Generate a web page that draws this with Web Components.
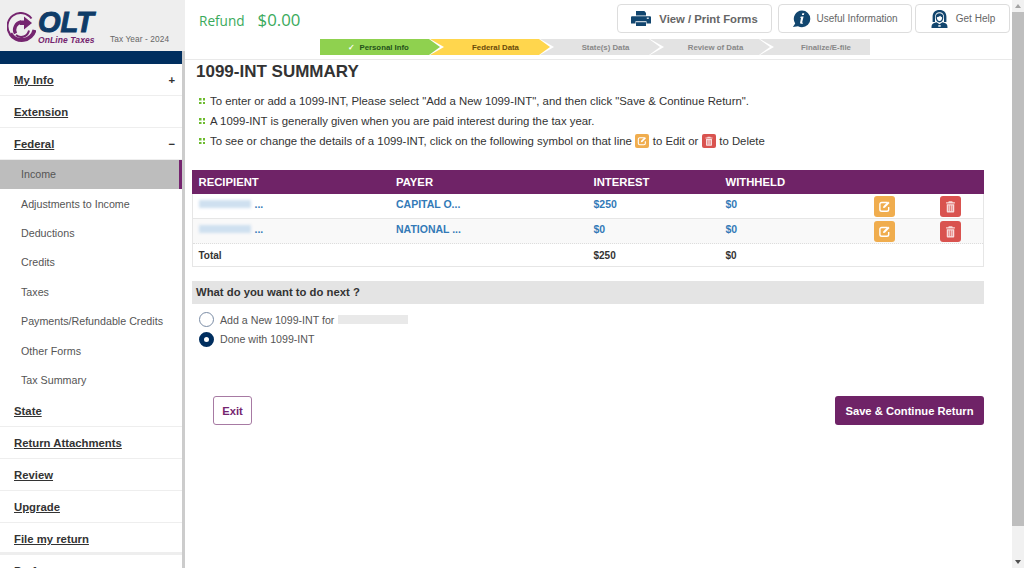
<!DOCTYPE html>
<html>
<head>
<meta charset="utf-8">
<title>1099-INT Summary</title>
<style>
html, body { margin: 0; height: 568px; overflow: hidden; background: #fff; }
body { font-family: "Liberation Sans", Arial, sans-serif; font-size: 12px; color: #333; }
</style>
</head>
<body>
<olt-app>
	<olt-sidebar slot="side">
		<olt-nav-item label="My Info" sign="+"></olt-nav-item>
		<olt-nav-item label="Extension"></olt-nav-item>
		<olt-nav-item label="Federal" sign="−"></olt-nav-item>
		<olt-sub-item active>Income</olt-sub-item>
		<olt-sub-item>Adjustments to Income</olt-sub-item>
		<olt-sub-item>Deductions</olt-sub-item>
		<olt-sub-item>Credits</olt-sub-item>
		<olt-sub-item>Taxes</olt-sub-item>
		<olt-sub-item>Payments/Refundable Credits</olt-sub-item>
		<olt-sub-item>Other Forms</olt-sub-item>
		<olt-sub-item>Tax Summary</olt-sub-item>
		<olt-nav-item label="State"></olt-nav-item>
		<olt-nav-item label="Return Attachments"></olt-nav-item>
		<olt-nav-item label="Review"></olt-nav-item>
		<olt-nav-item label="Upgrade"></olt-nav-item>
		<olt-nav-item label="File my return" thick></olt-nav-item>
		<olt-nav-item label="Preferences"></olt-nav-item>
	</olt-sidebar>
	<olt-topbar slot="top"></olt-topbar>
	<olt-summary slot="main"></olt-summary>
</olt-app>
<script>
const ICONS = {
	edit: `<svg viewBox="0 0 14 14" width="100%" height="100%"><path d="M9.6 3.2H4.4A1.7 1.7 0 0 0 2.7 4.9v4.8a1.7 1.7 0 0 0 1.7 1.7h4.8a1.7 1.7 0 0 0 1.7-1.7V7.4" fill="none" stroke="#fff" stroke-width="1.3"/><path d="M6 6.7 10.3 2.4l1.4 1.4L7.4 8.1 5.600 8.500z" fill="#fff"/></svg>`,
	trash: `<svg viewBox="0 0 14 14" width="100%" height="100%"><path d="M5.400 2.100h3.200l.5.900h2v1.100H2.900V3h2z" fill="#fff" opacity=".8"/><path d="M3.500 4.800h7v6.900a.8.8 0 0 1-.8.800H4.300a.8.8 0 0 1-.8-.8z" fill="#fff" opacity=".8"/><path d="M5.400 6v5.300M7 6v5.300M8.600 6v5.300" stroke="#d9534f" stroke-width=".6"/></svg>`,
	printer: `<svg viewBox="0 0 20 15" width="20" height="15"><path d="M5 0h8.300L15 1.700V4.500H5z" fill="#12466f"/><path d="M1 5.200h18a1 1 0 0 1 1 1V12.500H15.500V10.300H4.500V12.500H0V6.200a1 1 0 0 1 1-1z" fill="#12466f"/><path d="M5 11.200h10V15H5z" fill="#12466f"/><path d="M15.800 6.600h2v1.200h-2z" fill="#fff"/></svg>`,
	info: `<svg viewBox="0 0 19 18" width="19" height="18"><path d="M10 .6a8.300 8.300 0 0 1 0 16.600 8.400 8.400 0 0 1-4-1L.9 17.100l2.300-3.600A8.300 8.300 0 0 1 10 .6z" fill="#12466f"/><path d="M10.300 3.200h2l-.4 1.800H9.900zM9.500 6.500h2.100l-1.400 5.800c-.1.500.2.600.9.400l-.1.700c-1.300.6-3.100.6-2.900-.9l1-4.900-1 .1.1-.8z" fill="#fff"/></svg>`,
	help: `<svg viewBox="0 0 19 18" width="19" height="18"><path d="M9.500 0C5.200 0 2.600 2.600 2.600 6.600V12H5V6.800C5 4 6.900 2.200 9.500 2.200S14 4 14 6.800V12h2.400V6.600C16.400 2.600 13.800 0 9.500 0z" fill="#12466f"/><path d="M9.500 3.200c2.400 0 3.800 1.600 3.800 4 0 2.800-1.500 5.200-3.800 5.200S5.700 10 5.700 7.200c0-2.400 1.400-4 3.800-4z" fill="#12466f"/><path d="M6.900 7.200c1.400 0 2.500-.5 3.300-1.400.4.800 1 1.300 1.900 1.400.1 2.100-1.100 3.900-2.600 3.900S6.800 9.300 6.900 7.200z" fill="#fff"/><path d="M1.500 18c0-2.300.4-3.700 1.600-4.400 1-.6 2.300-.9 3.500-1.300l2.900 2 2.900-2c1.200.4 2.500.7 3.500 1.300 1.200.7 1.600 2.100 1.600 4.400z" fill="#12466f"/><path d="M8.300 15.200h2.400v1.500H8.300z" fill="#fff"/></svg>`
}

class OltApp extends HTMLElement {
	constructor() {
		super()
		this.attachShadow({ mode: "open" })
		this.shadowRoot.innerHTML = `
		<style>
		:host { display: flex; height: 568px; overflow: hidden; }
		.side { flex: 0 0 185px; height: 568px; overflow: hidden; }
		.body { flex: 1; min-width: 0; display: flex; flex-direction: column; }
		.bar { flex: 0 0 12px; background: #f1f1f1; display: flex; flex-direction: column; align-items: center; }
		.arrow { flex: 0 0 12px; display: flex; align-items: center; justify-content: center; }
		.thumb { flex: 0 0 514px; width: 100%; background: #bebebe; }
		.rest { flex: 1; }
		.up { border: 3px solid transparent; border-top: 0; border-bottom: 4px solid #a3a3a3; }
		.down { border: 3px solid transparent; border-bottom: 0; border-top: 4px solid #505050; }
		</style>
		<div class="side"><slot name="side"></slot></div>
		<div class="body"><slot name="top"></slot><slot name="main"></slot></div>
		<div class="bar">
			<div class="arrow"><i class="up"></i></div>
			<div class="thumb"></div>
			<div class="rest"></div>
			<div class="arrow"><i class="down"></i></div>
		</div>`
	}
}

class OltSidebar extends HTMLElement {
	constructor() {
		super()
		this.attachShadow({ mode: "open" })
		this.shadowRoot.innerHTML = `
		<style>
		:host { display: block; height: 568px; background: #fff; box-sizing: border-box; border-right: 3px solid #ccc; }
		.brand { height: 51px; width: 185px; background: #eee; display: flex; }
		.mark { margin: 12px 0 0 7px; flex: none; }
		.words { margin: 9px 0 0 2px; width: 67px; flex: none; }
		.olt { font: italic 900 29px/26px "Liberation Sans", Arial, sans-serif; color: #0f3c68; -webkit-text-stroke: 1px #0f3c68; }
		.tag { font: italic bold 8.500px/10px "Liberation Sans", Arial, sans-serif; color: #75256f; white-space: nowrap; letter-spacing: .1px; }
		.year { font-size: 8.300px; color: #666; margin: 34px 0 0 5px; white-space: nowrap; line-height: 10px; letter-spacing: .1px; }
		.navy { height: 13px; width: 182px; background: #002e5f; }
		</style>
		<div class="brand">
			<svg class="mark" width="29" height="32" viewBox="0 0 29 32">
				<path d="M24.500 6.500A13 13 0 0 0 3 22" fill="none" stroke="#75256f" stroke-width="2"/>
				<path d="M3.300 21.500A13.200 13.200 0 0 0 27.500 18" fill="none" stroke="#75256f" stroke-width="4"/>
				<path d="M8.500 21.500A8 8 0 0 1 14 10" fill="none" stroke="#75256f" stroke-width="3.400"/>
				<path d="M22 18.500A8 8 0 0 1 9 23" fill="none" stroke="#75256f" stroke-width="2"/>
				<path d="M13 8.500h4V4.500l8 6.500-8 6.500V13h-4z" fill="#75256f"/>
			</svg>
			<div class="words"><div class="olt">OLT</div><div class="tag">OnLine Taxes</div></div>
			<div class="year">Tax Year - 2024</div>
		</div>
		<div class="navy"></div>
		<slot></slot>`
	}
}

class OltNavItem extends HTMLElement {
	constructor() {
		super()
		this.attachShadow({ mode: "open" })
	}
	connectedCallback() {
		const sign = this.getAttribute("sign")
		this.shadowRoot.innerHTML = `
		<style>
		:host { display: flex; align-items: center; justify-content: space-between; height: 32px; box-sizing: border-box; border-bottom: 1px solid #eee; padding: 0 7px 0 14px; font-size: 11.340px; font-weight: bold; color: #333; }
		:host([thick]) { border-bottom-width: 3px; padding-top: 2px; }
		</style>
		<u>${this.getAttribute("label")}</u>${sign ? `<span>${sign}</span>` : ""}`
	}
}

class OltSubItem extends HTMLElement {
	constructor() {
		super()
		this.attachShadow({ mode: "open" })
		this.shadowRoot.innerHTML = `
		<style>
		:host { display: flex; align-items: center; height: 29.400px; box-sizing: border-box; padding: 0 0 1px 21px; font-size: 10.700px; color: #555; }
		:host([active]) { background: #bdbdbd; border-right: 3px solid #75256f; }
		</style>
		<slot></slot>`
	}
}

class OltTopbar extends HTMLElement {
	constructor() {
		super()
		this.attachShadow({ mode: "open" })
		this.shadowRoot.innerHTML = `
		<style>
		:host { display: block; height: 60px; box-sizing: border-box; border-bottom: 1px solid #e9e9e9; }
		.row { display: flex; height: 39px; box-sizing: border-box; padding: 4px 2px 0 14px; }
		.refund { flex: 1; display: flex; align-items: baseline; gap: 13px; color: #3aaa5c; font-family: "Open Sans", sans-serif; font-size: 13.600px; padding-top: 3px; line-height: 26px; height: 26px; }
		.refund b { font-weight: 400; font-size: 16.800px; }
		.btn { height: 29px; box-sizing: border-box; border: 1px solid #ddd; border-radius: 4px; display: flex; align-items: center; justify-content: center; margin-left: 6px; background: #fff; color: #666; font-size: 10px; }
		.btn.print { width: 155px; font-size: 11.300px; font-weight: bold; gap: 8px; }
		.btn.info { width: 134px; gap: 5px; }
		.btn.help { width: 95px; margin-left: 3px; gap: 7px; }
		</style>
		<div class="row">
			<div class="refund"><span>Refund</span><b>$0.00</b></div>
			<div class="btn print">${ICONS.printer}<span>View / Print Forms</span></div>
			<div class="btn info">${ICONS.info}<span>Useful Information</span></div>
			<div class="btn help">${ICONS.help}<span>Get Help</span></div>
		</div>
		<olt-steps></olt-steps>`
	}
}

class OltSteps extends HTMLElement {
	constructor() {
		super()
		this.attachShadow({ mode: "open" })
		const steps = [
			["done", "✓  Personal Info"], ["cur", "Federal Data"], ["", "State(s) Data"], ["", "Review of Data"], ["", "Finalize/E-file"]
		]
		this.shadowRoot.innerHTML = `
		<style>
		:host { display: flex; height: 16px; margin-left: 135px; width: 550px; }
		.step { flex: 0 0 110px; position: relative; background: #e3e3e3; color: #888; font-size: 7.800px; font-weight: bold; display: flex; align-items: center; justify-content: center; border-right: 1px solid #fff; white-space: pre; padding-left: 22px; box-sizing: border-box; }
		.step.last { border-right: 0; }
		.step + .step::before { content: ""; position: absolute; left: 0; top: 0; border-left: 14px solid #fff; border-top: 8px solid transparent; border-bottom: 8px solid transparent; }
		.tip { position: absolute; right: -11px; top: 0; z-index: 2; border-left: 11px solid #e3e3e3; border-top: 8px solid transparent; border-bottom: 8px solid transparent; }
		.done { background: #8fd14f; color: #24511a; padding-left: 8px; }
		.done .tip { border-left-color: #8fd14f; }
		.cur { background: #ffd64d; color: #6a4a0a; }
		.cur .tip { border-left-color: #ffd64d; }
		.last .tip { display: none; }
		.mark { color: #fff; }
		</style>
		${steps.map((s, i) => `<div class="step ${s[0]} ${i == 4 ? "last" : ""}"><span>${s[1].replace("✓", '<span class="mark">✓</span>')}</span><i class="tip"></i></div>`).join("")}`
	}
}

class OltSummary extends HTMLElement {
	constructor() {
		super()
		this.attachShadow({ mode: "open" })
		this.shadowRoot.innerHTML = `
		<style>
		:host { display: block; padding: 0 28px 0 7px; }
		h1 { margin: 0 0 0 4px; padding-top: 1px; font-size: 17px; line-height: 22px; color: #333; }
		ul { list-style: none; margin: 0; padding: 8px 0 0 7px; height: 87px; box-sizing: border-box; }
		li { display: flex; align-items: center; height: 20px; font-size: 11.370px; color: #333; white-space: pre; }
		.dot { width: 6px; height: 6px; margin: 0 5px 0 0; flex: none; background: linear-gradient(#6cbb2c, #6cbb2c) 0 0 / 2.500px 2.500px no-repeat, linear-gradient(#6cbb2c, #6cbb2c) 100% 0 / 2.500px 2.500px no-repeat, linear-gradient(#6cbb2c, #6cbb2c) 0 100% / 2.500px 2.500px no-repeat, linear-gradient(#6cbb2c, #6cbb2c) 100% 100% / 2.500px 2.500px no-repeat; }
		.mini { display: inline-flex; width: 14px; height: 14px; padding: 1px; box-sizing: border-box; border-radius: 2px; margin: 0 3.500px; }
		.o { background: #f0ad4e; }
		.r { background: #d9534f; }
		.next { height: 23px; box-sizing: border-box; background: #e4e4e4; display: flex; align-items: center; padding: 0 0 2px 4px; margin-top: 14px; font-size: 11.300px; font-weight: bold; }
		.radios { padding: 6px 0 0 7px; height: 92px; box-sizing: border-box; }
		.radio { display: flex; align-items: center; height: 19.500px; color: #555; font-size: 10.630px; }
		.radio i { width: 15px; height: 15px; border-radius: 50%; border: 1px solid #7a8ca5; box-sizing: border-box; margin-right: 6px; background: #fff; flex: none; }
		.radio i.on { border: 5px solid #002e5f; }
		.blur { display: inline-block; width: 70px; height: 9px; background: #e9e9e9; margin-left: 4px; filter: blur(.5px); }
		.actions { display: flex; justify-content: space-between; padding-left: 21px; }
		.exit, .save { height: 29px; box-sizing: border-box; border-radius: 3px; display: flex; align-items: center; justify-content: center; font-weight: bold; font-size: 11.200px; }
		.exit { width: 39px; border: 1px solid #a77aa3; color: #75256f; }
		.save { width: 149px; background: #6f2367; color: #fff; }
		</style>
		<h1>1099-INT SUMMARY</h1>
		<ul>
			<li><i class="dot"></i>To enter or add a 1099-INT, Please select "Add a New 1099-INT", and then click "Save &amp; Continue Return".</li>
			<li><i class="dot"></i>A 1099-INT is generally given when you are paid interest during the tax year.</li>
			<li><i class="dot"></i>To see or change the details of a 1099-INT, click on the following symbol on that line<span class="mini o">${ICONS.edit}</span>to Edit or<span class="mini r">${ICONS.trash}</span>to Delete</li>
		</ul>
		<olt-table></olt-table>
		<div class="next">What do you want to do next ?</div>
		<div class="radios">
			<div class="radio"><i></i><span>Add a New 1099-INT for</span><span class="blur"></span></div>
			<div class="radio"><i class="on"></i><span>Done with 1099-INT</span></div>
		</div>
		<div class="actions"><div class="exit">Exit</div><div class="save">Save &amp; Continue Return</div></div>`
	}
}

class OltTable extends HTMLElement {
	constructor() {
		super()
		this.attachShadow({ mode: "open" })
		const rows = [["CAPITAL O...", "$250", "$0"], ["NATIONAL ...", "$0", "$0"]]
		this.shadowRoot.innerHTML = `
		<style>
		:host { display: block; border: 1px solid #e6e6e6; border-top: 0; font-size: 10.500px; }
		.tr { display: grid; grid-template-columns: 197.500px 197.500px 132px 148.500px 66px 1fr; align-items: center; padding-left: 5.500px; box-sizing: border-box; }
		.th { height: 24px; background: #6f2367; color: #fff; font-weight: bold; font-size: 11.300px; margin: 0 -1px; padding-left: 6.500px; }
		.row { height: 25px; border-bottom: 1px solid #e6e6e6; color: #337ab7; font-weight: bold; }
		.row > span:not(.act) { padding-bottom: 4px; }
		.row.alt { background: #f9f9f9; border-bottom: 1px dotted #ddd; }
		.tot { height: 22px; color: #333; font-weight: bold; font-size: 10px; }
		.name { display: flex; align-items: center; gap: 4px; }
		.name i { width: 52px; height: 8px; background: #cfe0f0; filter: blur(1.500px); }
		.act { width: 21px; height: 21px; padding: 3px; box-sizing: border-box; border-radius: 3px; }
		.o { background: #f0ad4e; }
		.r { background: #d9534f; }
		</style>
		<div class="tr th"><span>RECIPIENT</span><span>PAYER</span><span>INTEREST</span><span>WITHHELD</span></div>
		${rows.map((r, i) => `<div class="tr row ${i ? "alt" : ""}"><span class="name"><i></i>...</span><span>${r[0]}</span><span>${r[1]}</span><span>${r[2]}</span><span class="act o">${ICONS.edit}</span><span class="act r">${ICONS.trash}</span></div>`).join("")}
		<div class="tr tot"><span>Total</span><span></span><span>$250</span><span>$0</span></div>`
	}
}

customElements.define("olt-app", OltApp)
customElements.define("olt-sidebar", OltSidebar)
customElements.define("olt-nav-item", OltNavItem)
customElements.define("olt-sub-item", OltSubItem)
customElements.define("olt-topbar", OltTopbar)
customElements.define("olt-steps", OltSteps)
customElements.define("olt-summary", OltSummary)
customElements.define("olt-table", OltTable)
</script>
</body>
</html>
